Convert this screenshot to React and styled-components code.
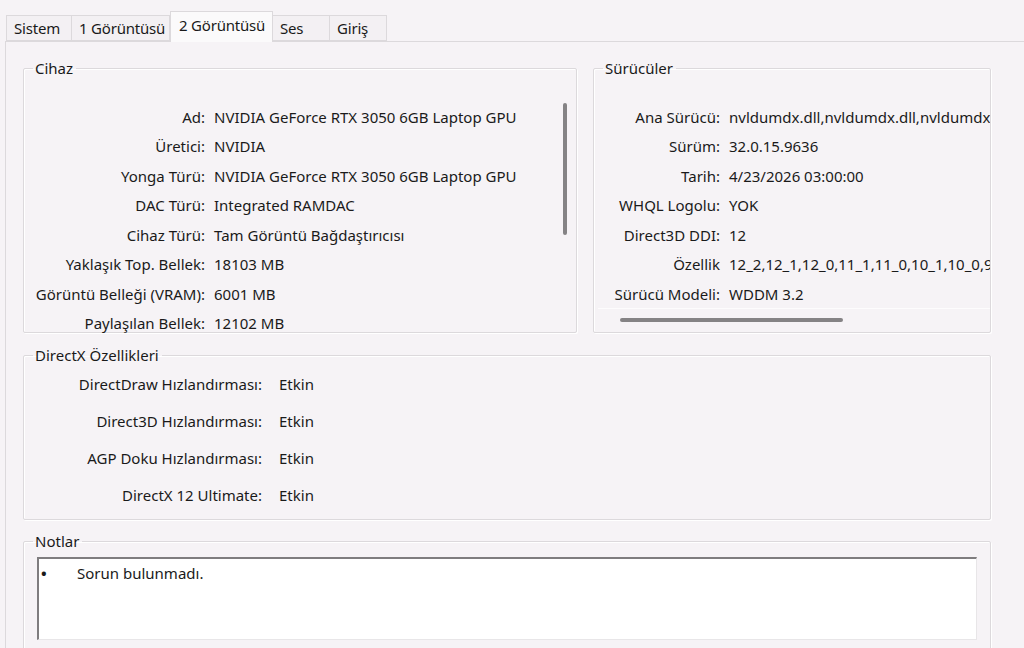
import styled, { createGlobalStyle } from "styled-components";

const GlobalStyle = createGlobalStyle`
  html, body {
    margin: 0;
    padding: 0;
    background: #f6f3f6;
  }
  body {
    font-family: "Noto Sans", "Open Sans", sans-serif;
    font-size: 15px;
    color: #1a1a1a;
  }
`;

const Window = styled.div`
  width: 1024px;
  height: 648px;
  overflow: hidden;
  box-sizing: border-box;
  padding: 12px 0 0 5px;
`;

const TabBar = styled.div`
  display: flex;
  align-items: flex-end;
  height: 29px;
  padding-left: 1px;
  position: relative;
  z-index: 1;
`;

const Tab = styled.div`
  box-sizing: border-box;
  width: ${(p) => p.$w}px;
  height: ${(p) => (p.$active ? 31 : 26)}px;
  margin-bottom: ${(p) => (p.$active ? -1 : 0)}px;
  display: flex;
  align-items: center;
  padding: 0 0 ${(p) => (p.$active ? 4 : 0)}px ${(p) => (p.$active ? 8 : 7)}px;
  letter-spacing: -0.2px;
  background: ${(p) => (p.$active ? "#fbfafb" : "#f3f0f3")};
  border: 1px solid #dcd9dc;
  border-bottom: ${(p) => (p.$active ? "none" : "1px solid #dcd9dc")};
  border-left: ${(p) => (p.$first || p.$active ? "1px solid #dcd9dc" : "none")};
  white-space: nowrap;
`;

const Panel = styled.div`
  border-top: 1px solid #dcd9dc;
  border-left: 1px solid #dcd9dc;
  height: 620px;
  box-sizing: border-box;
  padding: 16px 0 0 17px;
`;

const TopRow = styled.div`
  display: flex;
  gap: 16px;
`;

const Group = styled.fieldset`
  margin: ${(p) => p.$mt || 0}px 0 0 0;
  padding: 0;
  min-width: 0;
  box-sizing: border-box;
  width: ${(p) => p.$w}px;
  height: ${(p) => p.$h}px;
  border: 1px solid #dcd9dc;
  border-radius: 2px;
  box-shadow: inset 1px 1px 0 #fff, 1px 1px 0 #fff;
`;

const Legend = styled.legend`
  margin-left: 9px;
  padding: 0 3px 0 2px;
  line-height: 20px;
`;

const ScrollArea = styled.div`
  position: relative;
  overflow: hidden;
  margin: 4px ${(p) => p.$mr}px 0 4px;
  height: ${(p) => p.$h}px;
  padding-top: ${(p) => p.$pt}px;
  box-sizing: border-box;
`;

const Rows = styled.div`
  display: grid;
  grid-template-columns: ${(p) => p.$label}px max-content;
  grid-auto-rows: ${(p) => p.$row}px;
  column-gap: ${(p) => p.$gap}px;
  align-items: center;
  white-space: nowrap;
`;

const Label = styled.span`
  text-align: right;
`;

const Value = styled.span``;

const VThumb = styled.div`
  position: absolute;
  right: 5px;
  top: 21px;
  width: 4px;
  height: 132px;
  border-radius: 2px;
  background: #858385;
`;

const HTrack = styled.div`
  position: absolute;
  left: 0;
  right: 0;
  top: 226px;
  bottom: 0;
  border-top: 1px solid #fdfcfd;
`;

const HThumb = styled.div`
  position: absolute;
  left: 22px;
  top: 9px;
  width: 223px;
  height: 4px;
  border-radius: 2px;
  background: #858385;
`;

const NotesBox = styled.div`
  margin: 6px 13px 0 13px;
  height: 83px;
  box-sizing: border-box;
  background: #fff;
  border-top: 2px solid #7f7d7f;
  border-left: 2px solid #7f7d7f;
  border-right: 1px solid #e8e6e8;
  border-bottom: 1px solid #e8e6e8;
  padding: 4px 0 0 2px;
`;

const Note = styled.div`
  display: flex;
  line-height: 20px;
`;

const Bullet = styled.span`
  width: 36px;
  font-weight: 700;
`;

const device = [
  ["Ad:", "NVIDIA GeForce RTX 3050 6GB Laptop GPU"],
  ["Üretici:", "NVIDIA"],
  ["Yonga Türü:", "NVIDIA GeForce RTX 3050 6GB Laptop GPU"],
  ["DAC Türü:", "Integrated RAMDAC"],
  ["Cihaz Türü:", "Tam Görüntü Bağdaştırıcısı"],
  ["Yaklaşık Top. Bellek:", "18103 MB"],
  ["Görüntü Belleği (VRAM):", "6001 MB"],
  ["Paylaşılan Bellek:", "12102 MB"],
];

const drivers = [
  ["Ana Sürücü:", "nvldumdx.dll,nvldumdx.dll,nvldumdx.dll,nvldumdx.dll"],
  ["Sürüm:", "32.0.15.9636"],
  ["Tarih:", "4/23/2026 03:00:00"],
  ["WHQL Logolu:", "YOK"],
  ["Direct3D DDI:", "12"],
  ["Özellik", "12_2,12_1,12_0,11_1,11_0,10_1,10_0,9_3,9_2,9_1"],
  ["Sürücü Modeli:", "WDDM 3.2"],
];

const features = [
  ["DirectDraw Hızlandırması:", "Etkin"],
  ["Direct3D Hızlandırması:", "Etkin"],
  ["AGP Doku Hızlandırması:", "Etkin"],
  ["DirectX 12 Ultimate:", "Etkin"],
];

const tabs = [
  ["Sistem", 66],
  ["1 Görüntüsü", 98],
  ["2 Görüntüsü", 103],
  ["Ses", 57],
  ["Giriş", 57],
];

function RowList({ items }) {
  return items.map(([l, v]) => [
    <Label key={l + "l"}>{l}</Label>,
    <Value key={l + "v"}>{v}</Value>,
  ]);
}

export default function App() {
  return (
    <Window>
      <GlobalStyle />
      <TabBar>
        {tabs.map(([t, w], i) => (
          <Tab key={t} $w={w} $first={i === 0} $active={i === 2}>
            {t}
          </Tab>
        ))}
      </TabBar>
      <Panel>
        <TopRow>
          <Group $w={554} $h={275}>
            <Legend>Cihaz</Legend>
            <ScrollArea $h={251} $pt={20} $mr={4}>
              <Rows $label={177} $gap={9} $row={29.5}>
                <RowList items={device} />
              </Rows>
              <VThumb />
            </ScrollArea>
          </Group>
          <Group $w={398} $h={275}>
            <Legend>Sürücüler</Legend>
            <ScrollArea $h={251} $pt={20} $mr={0}>
              <Rows $label={122} $gap={9} $row={29.5}>
                <RowList items={drivers} />
              </Rows>
              <HTrack>
                <HThumb />
              </HTrack>
            </ScrollArea>
          </Group>
        </TopRow>
        <Group $w={968} $h={175} $mt={12}>
          <Legend>DirectX Özellikleri</Legend>
          <Rows $label={238} $gap={17} $row={37}>
            <RowList items={features} />
          </Rows>
        </Group>
        <Group $w={968} $h={130} $mt={11}>
          <Legend>Notlar</Legend>
          <NotesBox>
            <Note>
              <Bullet>•</Bullet>
              <span>Sorun bulunmadı.</span>
            </Note>
          </NotesBox>
        </Group>
      </Panel>
    </Window>
  );
}
